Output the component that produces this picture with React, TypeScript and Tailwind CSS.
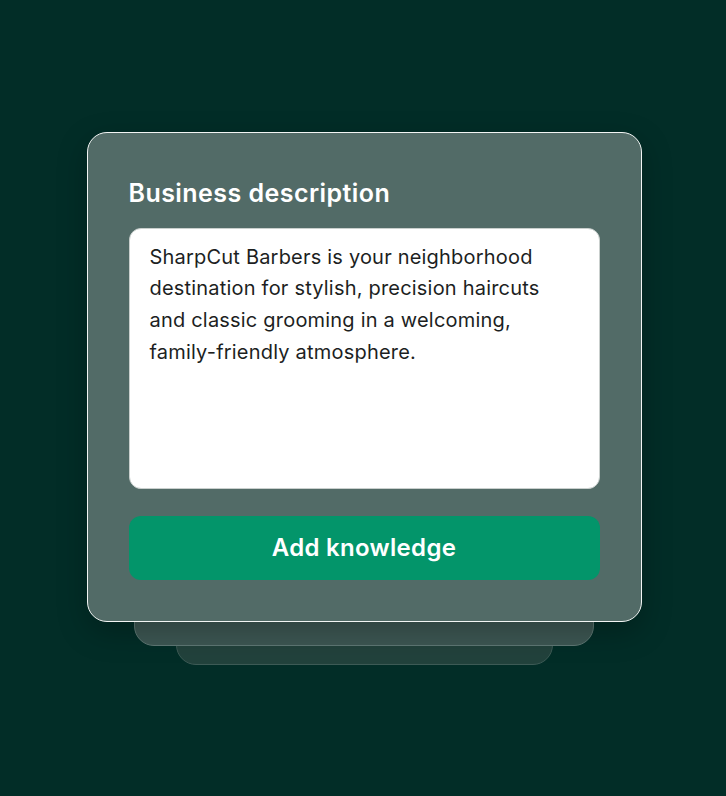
import React from "react";

export default function App() {
  return (
    <div
      className="w-[726px] h-[796px] bg-[#022d27] flex flex-col items-center pt-[132px] pl-[2px]"
      style={{ fontFamily: "Inter, 'Noto Sans', sans-serif" }}
    >
      <div className="relative z-30 w-[555px] rounded-[20px] border-[1.5px] border-[#f2f5f4] bg-[#526b67] px-[41px] pt-[44px] pb-[41px] shadow-[0_10px_30px_rgba(0,0,0,0.25)]">
        <h2 className="text-[25px] leading-[32px] font-semibold tracking-[0.45px] text-white">Business description</h2>
        <div className="mt-[19px] h-[261px] rounded-[12px] border border-[#c9cfcd] bg-white px-[20px] pt-[12.5px]">
          <p className="text-[20px] leading-[31.7px] tracking-[0.2px] text-[#1d1f1f]">
            SharpCut Barbers is your neighborhood destination for stylish, precision haircuts and classic grooming in a welcoming, family-friendly atmosphere.
          </p>
        </div>
        <button className="mt-[27px] flex h-[64px] w-full items-center justify-center rounded-[12px] bg-[#03956a] text-[24px] font-semibold tracking-[0.3px] text-white">
          Add knowledge
        </button>
      </div>
      <div className="relative z-20 -mt-[20px] h-[44px] w-[460px] rounded-b-[20px] border border-[#5f7874] bg-[#3d5753]" />
      <div className="relative z-10 -mt-[21px] h-[40px] w-[377px] rounded-b-[20px] border border-[#3d5a55] bg-[#22423c]" />
    </div>
  );
}
